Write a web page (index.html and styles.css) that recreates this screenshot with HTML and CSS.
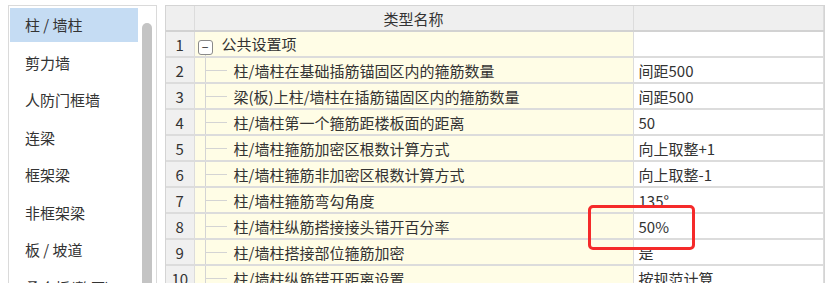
FILE: index.html
```html
<!DOCTYPE html>
<html lang="zh-CN">
<head>
    <meta charset="UTF-8">
    <meta name="viewport" content="width=device-width, initial-scale=1.0">
    <title>节点设置</title>
    <link rel="stylesheet" href="styles.css">
</head>
<body>
    <div class="tela">

        <aside class="lista">
            <ul class="itens">
                <li class="ativo">柱 / 墙柱</li>
                <li>剪力墙</li>
                <li>人防门框墙</li>
                <li>连梁</li>
                <li>框架梁</li>
                <li>非框架梁</li>
                <li>板 / 坡道</li>
                <li>叠合板(整厚)</li>
            </ul>
            <div class="trilho"><div class="barra"></div></div>
        </aside>

        <section class="grade">
            <table>
                <colgroup>
                    <col class="c-num">
                    <col class="c-nome">
                    <col class="c-valor">
                </colgroup>
                <thead>
                    <tr>
                        <th></th>
                        <th>类型名称</th>
                        <th></th>
                    </tr>
                </thead>
                <tbody>
                    <tr>
                        <td class="num">1</td>
                        <td class="nome grupo"><span class="caixa">−</span>公共设置项</td>
                        <td class="valor"></td>
                    </tr>
                    <tr>
                        <td class="num">2</td>
                        <td class="nome filho">柱/墙柱在基础插筋锚固区内的箍筋数量</td>
                        <td class="valor">间距500</td>
                    </tr>
                    <tr>
                        <td class="num">3</td>
                        <td class="nome filho">梁(板)上柱/墙柱在插筋锚固区内的箍筋数量</td>
                        <td class="valor">间距500</td>
                    </tr>
                    <tr>
                        <td class="num">4</td>
                        <td class="nome filho">柱/墙柱第一个箍筋距楼板面的距离</td>
                        <td class="valor">50</td>
                    </tr>
                    <tr>
                        <td class="num">5</td>
                        <td class="nome filho">柱/墙柱箍筋加密区根数计算方式</td>
                        <td class="valor">向上取整+1</td>
                    </tr>
                    <tr>
                        <td class="num">6</td>
                        <td class="nome filho">柱/墙柱箍筋非加密区根数计算方式</td>
                        <td class="valor">向上取整-1</td>
                    </tr>
                    <tr>
                        <td class="num">7</td>
                        <td class="nome filho">柱/墙柱箍筋弯勾角度</td>
                        <td class="valor">135°</td>
                    </tr>
                    <tr>
                        <td class="num">8</td>
                        <td class="nome filho">柱/墙柱纵筋搭接接头错开百分率</td>
                        <td class="valor">50%</td>
                    </tr>
                    <tr>
                        <td class="num">9</td>
                        <td class="nome filho">柱/墙柱搭接部位箍筋加密</td>
                        <td class="valor">是</td>
                    </tr>
                    <tr>
                        <td class="num">10</td>
                        <td class="nome filho">柱/墙柱纵筋错开距离设置</td>
                        <td class="valor">按规范计算</td>
                    </tr>
                </tbody>
            </table>
        </section>

    </div>

    <div class="destaque"></div>
</body>
</html>
```

FILE: styles.css
```css
* {
    box-sizing: border-box;
    margin: 0;
    padding: 0;
}

body {
    width: 825px;
    height: 283px;
    overflow: hidden;
    background-color: white;
    color: #333;
    font-family: "Noto Sans CJK SC", "Microsoft YaHei", sans-serif;
    font-size: 15px;
}

.tela {
    display: flex;
    gap: 8px;
    padding: 5px 0 0 8px;
}

/* lista da esquerda */

.lista {
    display: flex;
    width: 149px;
    height: 300px;
    border: 1px solid #dadada;
    padding: 2px 0 0 1px;
}

.itens {
    list-style: none;
    width: 128px;
}

.itens li {
    height: 34px;
    margin-bottom: 3.5px;
    padding-left: 15px;
    line-height: 34px;
    white-space: nowrap;
}

.itens .ativo {
    background-color: #c5dcf3;
}

.trilho {
    padding: 15px 0 0 4px;
}

.barra {
    width: 10px;
    height: 300px;
    border-radius: 5px;
    background-color: #c4c4c4;
}

/* grade */

.grade {
    flex: 1;
    border-top: 1px solid #d4d4d4;
    border-left: 1px solid #d4d4d4;
    border-right: 1px solid #d4d4d4;
}

table {
    width: 100%;
    border-collapse: collapse;
    table-layout: fixed;
}

.c-num {
    width: 28px;
}

.c-nome {
    width: 439px;
}

th, td {
    height: 26px;
    border: 1px solid #dcdcdc;
    border-width: 0 1px 2px 0;
    font-weight: normal;
    white-space: nowrap;
    overflow: hidden;
}

th {
    height: 25px;
    background-color: #efefef;
    border-bottom-color: #d2d2d2;
}

.num {
    background-color: #f0f0f0;
    text-align: center;
}

.nome {
    background-color: #fffde6;
}

.grupo {
    padding-left: 3px;
    background: linear-gradient(#d4d4d4, #d4d4d4) 10px 21px / 1px 6px no-repeat, #fffde6;
}

.caixa {
    display: inline-block;
    width: 15px;
    height: 15px;
    margin-right: 9px;
    border: 1px solid #8a8a8a;
    border-radius: 3px;
    background-color: white;
    font-size: 12px;
    line-height: 12px;
    text-align: center;
    vertical-align: -2px;
}

.filho {
    padding-left: 39px;
    background:
        linear-gradient(#d4d4d4, #d4d4d4) 10px 0 / 1px 100% no-repeat,
        linear-gradient(#d4d4d4, #d4d4d4) 10px 50% / 22px 1px no-repeat,
        #fffde6;
}

.valor {
    padding-left: 5px;
}

/* marcação vermelha */

.destaque {
    position: absolute;
    left: 588px;
    top: 205px;
    width: 107px;
    height: 45px;
    border: 3px solid #f52a2a;
    border-radius: 5px;
}
```
